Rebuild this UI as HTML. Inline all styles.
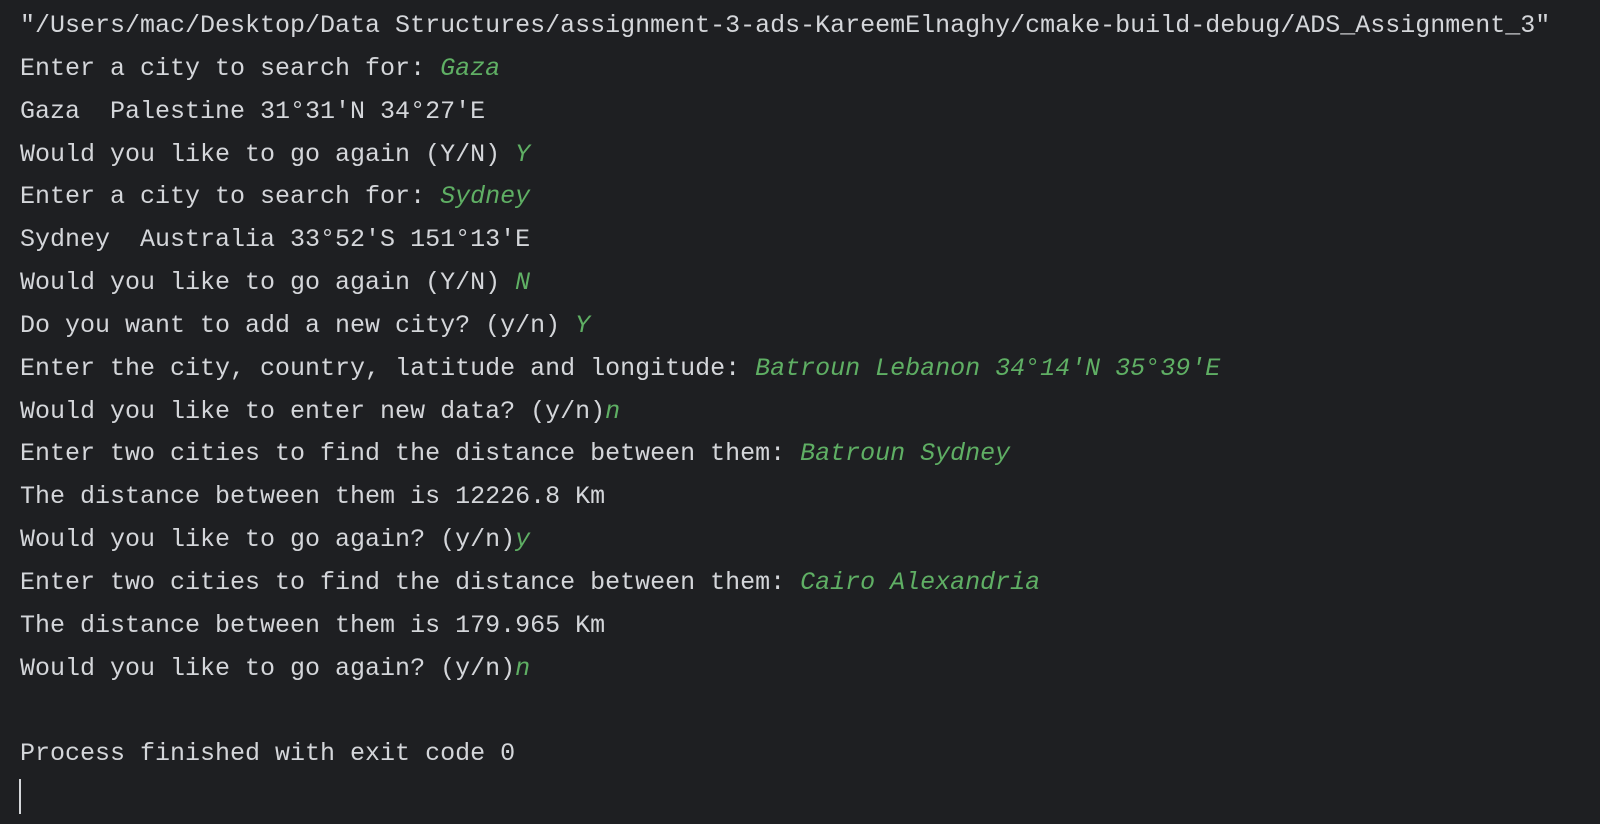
<!DOCTYPE html>
<html><head><meta charset="utf-8"><style>
html,body{margin:0;padding:0;background:#1e1f22;width:1600px;height:824px;overflow:hidden}
.t{position:absolute;left:20px;top:5px;font-family:"Liberation Mono","DejaVu Sans Mono",monospace;font-size:25px;line-height:42.85px;color:#d4d6da;white-space:pre}
.g{color:#5faf64;font-style:italic}
.c{position:absolute;left:19px;top:779px;width:2px;height:35px;background:#d4d6da}
</style></head><body>
<div class="t">"/Users/mac/Desktop/Data Structures/assignment-3-ads-KareemElnaghy/cmake-build-debug/ADS_Assignment_3"
Enter a city to search for: <span class="g">Gaza</span>
Gaza  Palestine 31°31'N 34°27'E
Would you like to go again (Y/N) <span class="g">Y</span>
Enter a city to search for: <span class="g">Sydney</span>
Sydney  Australia 33°52'S 151°13'E
Would you like to go again (Y/N) <span class="g">N</span>
Do you want to add a new city? (y/n) <span class="g">Y</span>
Enter the city, country, latitude and longitude: <span class="g">Batroun Lebanon 34°14'N 35°39'E</span>
Would you like to enter new data? (y/n)<span class="g">n</span>
Enter two cities to find the distance between them: <span class="g">Batroun Sydney</span>
The distance between them is 12226.8 Km
Would you like to go again? (y/n)<span class="g">y</span>
Enter two cities to find the distance between them: <span class="g">Cairo Alexandria</span>
The distance between them is 179.965 Km
Would you like to go again? (y/n)<span class="g">n</span>

Process finished with exit code 0</div>
<div class="c"></div>
</body></html>
